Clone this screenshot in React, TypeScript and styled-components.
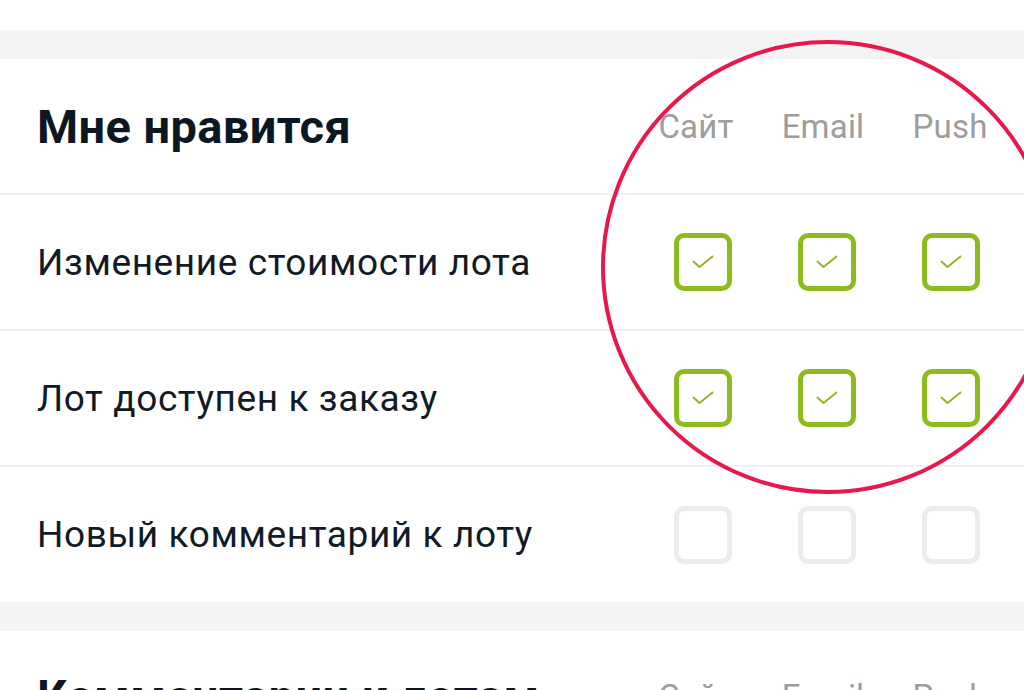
import * as React from 'react';
import styled, { createGlobalStyle } from 'styled-components';

const GlobalStyle = createGlobalStyle`
  html, body {
    margin: 0;
    padding: 0;
    background: #fff;
    overflow: hidden;
  }
  body {
    font-family: Roboto, "Noto Sans", Arial, sans-serif;
  }
`;

const Page = styled.div`
  position: relative;
  width: 1024px;
  height: 690px;
  overflow: hidden;
  background: #fff;
  padding-top: 30px;
  box-sizing: border-box;
`;

const Band = styled.div`
  height: 29px;
  background: #f4f4f4;
`;

const Section = styled.section`
  background: #fff;
`;

const Row = styled.div<{ $last?: boolean; $height?: number }>`
  display: grid;
  grid-template-columns: 1fr repeat(3, 124px);
  align-items: center;
  height: ${(p) => p.$height ?? 134}px;
  padding: 0 11px 0 37px;
  border-bottom: ${(p) => (p.$last ? 'none' : '2px solid #f1f1f1')};
`;

const Title = styled.h2`
  margin: 0;
  font-size: 47px;
  font-weight: 700;
  color: #0c1722;
  letter-spacing: 0.4px;
  white-space: nowrap;
`;

const Label = styled.div`
  font-size: 37px;
  color: #121b25;
  letter-spacing: 0.6px;
  white-space: nowrap;
`;

const Channel = styled.div<{ $shift: number }>`
  text-align: center;
  font-size: 33px;
  color: #9d9d9d;
  letter-spacing: 0.2px;
  transform: translateX(${(p) => p.$shift}px);
`;

const Cell = styled.div`
  display: flex;
  justify-content: center;
`;

const Box = styled.div<{ $on: boolean }>`
  width: 58px;
  height: 58px;
  box-sizing: border-box;
  border: 5px solid ${(p) => (p.$on ? '#8dbb1e' : '#ececec')};
  border-radius: 10px;
  display: flex;
  align-items: center;
  justify-content: center;
`;

const Circle = styled.div`
  position: absolute;
  left: 601px;
  top: 40px;
  width: 454px;
  height: 454px;
  box-sizing: border-box;
  border: 4px solid #e8184b;
  border-radius: 50%;
  pointer-events: none;
`;

const Check = () => (
  <svg width="22" height="14" viewBox="0 0 22 14" fill="none">
    <polyline points="1.5,6.5 7.5,12 20.5,1.5" stroke="#8dbb1e" strokeWidth="2" strokeLinecap="round" strokeLinejoin="round" />
  </svg>
);

const channels = [
  { name: 'Сайт', shift: -7 },
  { name: 'Email', shift: -4 },
  { name: 'Push', shift: -1 },
];

const Header = ({ title, height }: { title: string; height?: number }) => (
  <Row $height={height}>
    <Title>{title}</Title>
    {channels.map((c) => (
      <Channel key={c.name} $shift={c.shift}>{c.name}</Channel>
    ))}
  </Row>
);

const Option = ({ label, on, last }: { label: string; on: boolean; last?: boolean }) => (
  <Row $last={last} $height={last ? 135 : 134}>
    <Label>{label}</Label>
    {channels.map((c) => (
      <Cell key={c.name}>
        <Box $on={on}>{on && <Check />}</Box>
      </Cell>
    ))}
  </Row>
);

export default function App() {
  return (
    <Page>
      <GlobalStyle />
      <Band />
      <Section>
        <Header title="Мне нравится" />
        <Option label="Изменение стоимости лота" on />
        <Option label="Лот доступен к заказу" on />
        <Option label="Новый комментарий к лоту" on={false} last />
      </Section>
      <Band />
      <Section>
        <Header title="Комментарии к лотам" height={131} />
      </Section>
      <Circle />
    </Page>
  );
}
